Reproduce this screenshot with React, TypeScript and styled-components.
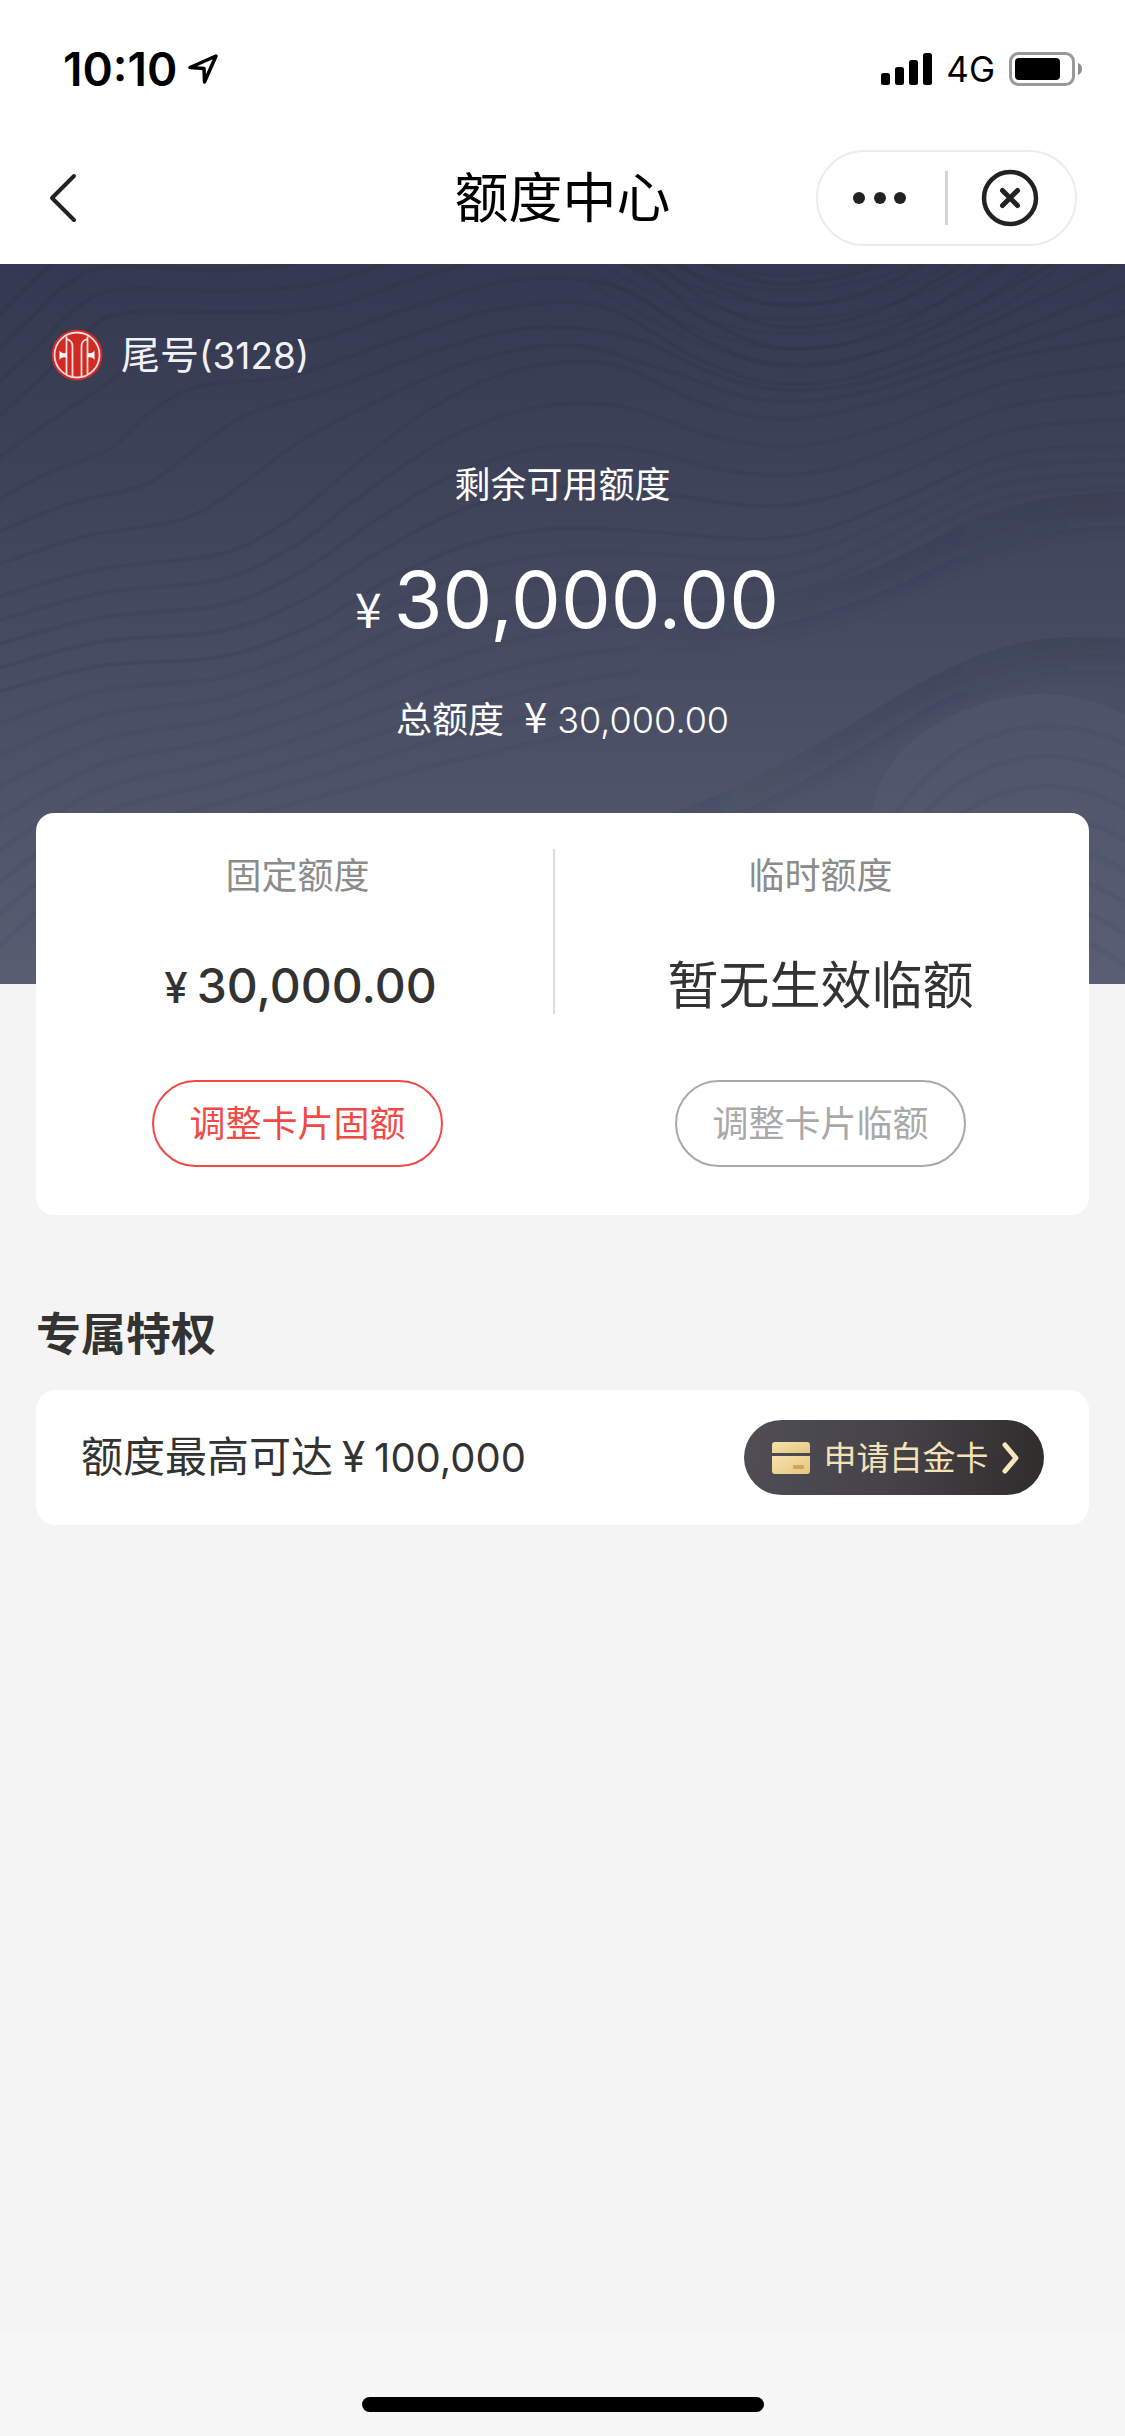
import React from 'react';
import styled, { createGlobalStyle } from 'styled-components';

const GlobalStyle = createGlobalStyle`
  *, *::before, *::after { box-sizing: border-box; }
  body {
    margin: 0;
    background: #f4f4f4;
    color: #333333;
    font-family: Inter, 'Noto Sans CJK SC', sans-serif;
    -webkit-font-smoothing: antialiased;
  }
  button { font-family: inherit; cursor: pointer; }
  h1, h2, p { margin: 0; font-weight: 400; }
`;

/* ---------- shell ---------- */

const Page = styled.div`
  display: flex;
  flex-direction: column;
  min-height: 100vh;
`;

const StatusBar = styled.div`
  display: flex;
  align-items: center;
  justify-content: space-between;
  height: 132px;
  padding: 0 42px 0 63px;
  background: #ffffff;
  color: #000000;
`;

const StatusGroup = styled.div<{ $gap: number }>`
  display: flex;
  align-items: center;
  gap: ${(p) => p.$gap}px;
  padding-top: 6px;
`;

const Clock = styled.span`
  font-size: 46px;
  line-height: 54px;
  font-weight: 600;
`;

const Network = styled.span`
  font-size: 35px;
  line-height: 44px;
`;

const NavBar = styled.header`
  display: grid;
  grid-template-columns: 1fr auto 1fr;
  align-items: center;
  height: 132px;
  padding: 0 48px;
  background: #ffffff;
`;

const BackButton = styled.button`
  display: flex;
  justify-self: start;
  padding: 0;
  border: 0;
  background: none;
`;

const NavTitle = styled.h1`
  padding-top: 2px;
  color: #000000;
  font-size: 54px;
  line-height: 72px;
`;

const Capsule = styled.div`
  display: flex;
  align-items: center;
  justify-self: end;
  width: 261px;
  height: 96px;
  border: 2px solid #ececec;
  border-radius: 48px;
`;

const CapsuleButton = styled.button`
  display: flex;
  flex: 1;
  align-items: center;
  justify-content: center;
  height: 100%;
  padding: 0 3px 0 0;
  border: 0;
  background: none;
`;

const CapsuleDivider = styled.span`
  width: 3px;
  height: 54px;
  background: #d4d4d4;
`;

/* ---------- hero ---------- */

const Hero = styled.section`
  position: relative;
  display: flex;
  flex-direction: column;
  align-items: center;
  padding: 63px 51px 236px;
  overflow: hidden;
  background: linear-gradient(180deg, #343850 0%, #454a60 50%, #585d72 100%);
  color: #ffffff;
`;

const HeroArt = styled.svg`
  position: absolute;
  inset: 0;
  width: 100%;
  height: 100%;
`;

const CardTag = styled.div`
  position: relative;
  display: flex;
  align-items: center;
  align-self: flex-start;
  gap: 18px;
  color: #f1f1f5;
  font-size: 39px;
  line-height: 56px;
`;

const CardDigits = styled.span`
  font-size: 37px;
  line-height: 1;
`;

const HeroLabel = styled.p`
  position: relative;
  margin-top: 74px;
  font-size: 36px;
  line-height: 56px;
`;

const Yen = styled.span<{ $size: number }>`
  font-family: 'Noto Sans CJK SC', sans-serif;
  font-size: ${(p) => p.$size}px;
  line-height: 1;
  font-weight: 400;
`;

const HeroAmount = styled.p`
  position: relative;
  display: flex;
  align-items: baseline;
  gap: 12px;
  margin-top: 36px;
  padding-left: 9px;
  font-size: 79px;
  line-height: 100px;
  font-weight: 400;
`;

const HeroTotal = styled.p`
  position: relative;
  display: flex;
  align-items: baseline;
  gap: 10px;
  margin-top: 43px;
  font-size: 36px;
  line-height: 56px;
`;

const TotalFigure = styled.span`
  font-weight: 300;
  line-height: 1;
`;

const TotalLabel = styled.span`
  margin-right: 10px;
`;

/* ---------- content ---------- */

const Content = styled.main`
  position: relative;
  display: flex;
  flex-direction: column;
  margin-top: -171px;
  padding: 0 36px;
`;

const LimitCard = styled.section`
  display: flex;
  padding: 36px 7px 48px 0;
  border-radius: 18px;
  background: #ffffff;
`;

const LimitColumn = styled.div`
  display: flex;
  flex: 1;
  flex-direction: column;
  align-items: center;
`;

const LimitDivider = styled.span`
  width: 2px;
  height: 165px;
  margin: 0 4px 0 -6px;
  background: #dcdcdc;
`;

const LimitLabel = styled.h2`
  color: #8c8c8c;
  font-size: 36px;
  line-height: 54px;
`;

const LimitValue = styled.p`
  display: flex;
  align-items: baseline;
  margin-top: 45px;
  font-size: 51px;
  line-height: 76px;
`;

const LimitFigure = styled.span`
  padding-left: 9px;
  font-size: 48px;
  font-weight: 500;
`;

const LimitYen = styled.span`
  padding-left: 6px;
  font-size: 42px;
  line-height: 1;
  font-weight: 500;
`;

const OutlineButton = styled.button<{ $tone: string }>`
  width: 291px;
  height: 87px;
  margin-top: 56px;
  padding: 0;
  border: 2px solid ${(p) => p.$tone};
  border-radius: 44px;
  background: none;
  color: ${(p) => p.$tone};
  font-size: 36px;
  line-height: 52px;
`;

const SectionTitle = styled.h2`
  margin-top: 88px;
  font-size: 45px;
  line-height: 64px;
  font-weight: 700;
`;

const PerkCard = styled.section`
  display: flex;
  align-items: center;
  justify-content: space-between;
  margin-top: 23px;
  padding: 30px 45px;
  border-radius: 20px;
  background: #ffffff;
`;

const PerkText = styled.p`
  display: flex;
  align-items: baseline;
  gap: 9px;
  font-size: 42px;
  line-height: 60px;
`;

const PerkFigure = styled.span`
  font-size: 40px;
`;

const PerkButton = styled.button`
  display: flex;
  align-items: center;
  justify-content: space-between;
  width: 300px;
  height: 75px;
  padding: 0 24px 0 28px;
  border: 0;
  border-radius: 38px;
  background: linear-gradient(100deg, #504d56 0%, #454348 50%, #2f2c2b 100%);
  color: #f5e2b8;
  font-size: 33px;
  line-height: 48px;
`;

const HomeArea = styled.footer`
  display: flex;
  align-items: flex-end;
  justify-content: center;
  height: 104px;
  margin-top: auto;
  padding-bottom: 24px;
  background: #f7f7f7;
`;

const HomeIndicator = styled.span`
  width: 402px;
  height: 15px;
  border-radius: 8px;
  background: #000000;
`;

/* ---------- contour artwork ---------- */

type Point = [number, number];

const smooth = (pts: Point[]) => {
  let d = `M${pts[0][0]} ${pts[0][1]}`;
  for (let i = 0; i < pts.length - 1; i += 1) {
    const a = pts[Math.max(i - 1, 0)];
    const b = pts[i];
    const c = pts[i + 1];
    const e = pts[Math.min(i + 2, pts.length - 1)];
    d += ` C${b[0] + (c[0] - a[0]) / 6} ${b[1] + (c[1] - a[1]) / 6} ${c[0] - (e[0] - b[0]) / 6} ${c[1] - (e[1] - b[1]) / 6} ${c[0]} ${c[1]}`;
  }
  return d;
};

const between = (from: Point[], to: Point[], count: number) =>
  Array.from({ length: count }, (_, i) => {
    const t = i / (count - 1);
    return smooth(from.map((p, k) => [p[0] + (to[k][0] - p[0]) * t, p[1] + (to[k][1] - p[1]) * t] as Point));
  });

const rim: Point[] = [[-10, 60], [30, 20], [60, -5], [100, -20], [220, -15], [320, -30], [420, -60], [560, -70], [650, -30], [720, 5], [790, 20], [880, 0], [980, -60]];
const ridge: Point[] = [[-10, 160], [45, 110], [85, 68], [130, 48], [240, 48], [330, 42], [430, 10], [540, -15], [640, 5], [705, 55], [790, 85], [900, 60], [1060, -40]];
const slope: Point[] = [[-10, 240], [50, 208], [110, 185], [150, 148], [200, 122], [290, 112], [400, 75], [500, 45], [600, 42], [705, 98], [790, 120], [900, 98], [1135, -10]];
const basin: Point[] = [[-10, 335], [100, 305], [220, 290], [290, 255], [350, 205], [430, 145], [520, 105], [610, 100], [705, 140], [790, 155], [890, 135], [1005, 95], [1135, 72]];
const shelf: Point[] = [[-10, 430], [100, 402], [220, 393], [310, 362], [390, 315], [470, 280], [550, 265], [640, 267], [760, 275], [830, 263], [900, 235], [1010, 190], [1135, 182]];
const foot: Point[] = [[-10, 690], [100, 600], [220, 560], [330, 530], [440, 500], [530, 480], [600, 465], [680, 450], [750, 435], [820, 410], [880, 370], [980, 310], [1135, 290]];

const upperLines = [...between(rim, ridge, 4), ...between(ridge, slope, 3).slice(1), ...between(slope, basin, 4).slice(1), ...between(basin, shelf, 5).slice(1)];
const lowerLines = between(shelf, foot, 9).slice(1);
const bowlLines = between(
  [[620, -40], [690, -5], [760, 10], [830, 8], [900, -10], [960, -50]],
  [[590, 20], [690, 75], [770, 98], [860, 92], [990, 50], [1100, -30]],
  7,
);

const creaseTop = 'M640 350 C760 350 850 318 930 278 C1000 242 1040 228 1140 228';
const creaseLow = 'M560 580 C700 555 820 480 900 430 C980 385 1030 364 1140 376';

const ContourArt = () => (
  <HeroArt viewBox="0 0 1125 720" preserveAspectRatio="none" aria-hidden="true">
    <defs>
      <filter id="soft" x="-10%" y="-40%" width="120%" height="180%">
        <feGaussianBlur stdDeviation="12" />
      </filter>
      <clipPath id="belowTop">
        <path d={`${creaseTop} V720 H640 Z`} />
      </clipPath>
      <clipPath id="belowLow">
        <path d={`${creaseLow} V720 H560 Z`} />
      </clipPath>
      <clipPath id="aboveTop">
        <path d={`${creaseTop} V-10 H-20 V720 H640 Z`} />
      </clipPath>
      <linearGradient id="creaseShade" gradientUnits="userSpaceOnUse" x1="600" y1="0" x2="1125" y2="0">
        <stop offset="0" stopColor="#2c3042" stopOpacity="0" />
        <stop offset="0.5" stopColor="#2c3042" stopOpacity="0.16" />
        <stop offset="1" stopColor="#2c3042" stopOpacity="0.26" />
      </linearGradient>
      <linearGradient id="dune" x1="0" y1="0" x2="0" y2="1">
        <stop offset="0" stopColor="#666c84" stopOpacity="0.16" />
        <stop offset="1" stopColor="#666c84" stopOpacity="0.1" />
      </linearGradient>
    </defs>
    <g fill="none" stroke="#23283c" strokeOpacity="0.12" strokeWidth="4" clipPath="url(#aboveTop)">
      {upperLines.map((d, i) => (
        <path key={i} d={d} />
      ))}
    </g>
    <g fill="none" stroke="#23283c" strokeOpacity="0.06" strokeWidth="5" clipPath="url(#aboveTop)">
      {lowerLines.map((d, i) => (
        <path key={i} d={d} />
      ))}
    </g>
    <g fill="none" stroke="#23283c" strokeOpacity="0.07" strokeWidth="3">
      {bowlLines.map((d, i) => (
        <path key={i} d={d} />
      ))}
    </g>
    <g clipPath="url(#belowTop)">
      <path d={creaseTop} fill="none" stroke="url(#creaseShade)" strokeWidth="50" filter="url(#soft)" />
    </g>
    <g clipPath="url(#belowLow)">
      <path d={creaseLow} fill="none" stroke="url(#creaseShade)" strokeWidth="50" filter="url(#soft)" />
    </g>
    <path d="M872 560 C870 490 950 434 1040 430 C1080 430 1100 440 1125 450 V720 H890 C878 660 872 620 872 560 Z" fill="url(#dune)" />
    <g fill="none" stroke="#2c3042" strokeOpacity="0.08" strokeWidth="5">
      {[0, 1, 2, 3, 4, 5, 6, 7].map((i) => (
        <path key={i} d={`M${890 + i * 8} ${560 + i * 26} C${930 + i * 8} ${490 + i * 26} ${1020 + i * 4} ${430 + i * 30} 1130 ${482 + i * 32}`} />
      ))}
    </g>
  </HeroArt>
);

/* ---------- icons ---------- */

const LocationIcon = () => (
  <svg width="32" height="32" viewBox="0 0 32 32" fill="none" stroke="#000" strokeWidth="3.500" strokeLinejoin="round" aria-hidden="true">
    <path d="M29 3 L3 14.500 L17 15.500 L17.500 29 Z" />
  </svg>
);

const SignalIcon = () => (
  <svg width="51" height="32" viewBox="0 0 51 32" aria-hidden="true">
    <rect x="0" y="20" width="9" height="12" rx="2.500" />
    <rect x="14" y="14" width="9" height="18" rx="2.500" />
    <rect x="28" y="7" width="9" height="25" rx="2.500" />
    <rect x="42" y="0" width="9" height="32" rx="2.500" />
  </svg>
);

const BatteryIcon = () => (
  <svg width="74" height="34" viewBox="0 0 74 34" aria-hidden="true">
    <rect x="1.500" y="1.500" width="63" height="31" rx="8" fill="none" stroke="#999" strokeWidth="3" />
    <rect x="6" y="6" width="45" height="22" rx="4" />
    <path d="M69 11 C72 12 73 14.500 73 17 C73 19.500 72 22 69 23 Z" fill="#8e8e8e" />
  </svg>
);

const BackIcon = () => (
  <svg width="30" height="50" viewBox="0 0 30 50" fill="none" stroke="#222" strokeWidth="4" strokeLinecap="round" strokeLinejoin="round" aria-hidden="true">
    <path d="M26 3 L4 25 L26 47" />
  </svg>
);

const MoreIcon = () => (
  <svg width="54" height="14" viewBox="0 0 54 14" fill="#222" aria-hidden="true">
    <circle cx="6" cy="7" r="6" />
    <circle cx="27" cy="7" r="6" />
    <circle cx="47" cy="7" r="6" />
  </svg>
);

const CloseIcon = () => (
  <svg width="58" height="58" viewBox="0 0 58 58" fill="none" stroke="#222" strokeLinecap="round" aria-hidden="true">
    <circle cx="29" cy="29" r="26" strokeWidth="4.500" />
    <path d="M21.500 21.500 L36.500 36.500 M36.500 21.500 L21.500 36.500" strokeWidth="5" />
  </svg>
);

const BankLogo = () => (
  <svg width="52" height="52" viewBox="0 0 52 52" aria-hidden="true">
    <circle cx="26" cy="26" r="25.500" fill="#cf2a24" />
    <g fill="none" stroke="#f6dcdc" strokeWidth="1.800">
      <circle cx="26" cy="26" r="22.500" />
      <path d="M15.500 7.500 V45" />
      <path d="M36.500 7.500 V45" />
      <path d="M15.500 10 C20 11.500 21.500 13 21.500 18 V48" />
      <path d="M36.500 10 C32 11.500 30.500 13 30.500 18 V48" />
    </g>
    <path d="M8.500 21.500 C10 24 12 24.500 15.500 24 V28.500 C12 28 10 28.500 8.500 31 Z" fill="#fff" />
    <path d="M43.500 21.500 C42 24 40 24.500 36.500 24 V28.500 C40 28 42 28.500 43.500 31 Z" fill="#fff" />
  </svg>
);

const GoldCardIcon = () => (
  <svg width="38" height="32" viewBox="0 0 38 32" aria-hidden="true">
    <defs>
      <linearGradient id="gold" x1="0" y1="0" x2="1" y2="1">
        <stop offset="0" stopColor="#f7e2ae" />
        <stop offset="1" stopColor="#e6c67c" />
      </linearGradient>
    </defs>
    <path d="M0 3 Q0 0 3 0 H35 Q38 0 38 3 V11 H0 Z" fill="url(#gold)" />
    <path d="M0 14 H38 V29 Q38 32 35 32 H3 Q0 32 0 29 Z" fill="url(#gold)" />
    <rect x="21" y="23" width="11" height="4" rx="1" fill="#cfa565" />
  </svg>
);

const ChevronIcon = () => (
  <svg width="18" height="32" viewBox="0 0 18 32" fill="none" stroke="#f9e6bf" strokeWidth="5" strokeLinecap="round" strokeLinejoin="round" aria-hidden="true">
    <path d="M3 3 L14 16 L3 29" />
  </svg>
);

/* ---------- page ---------- */

export default function App() {
  return (
    <Page>
      <GlobalStyle />
      <StatusBar>
        <StatusGroup $gap={10}>
          <Clock>10:10</Clock>
          <LocationIcon />
        </StatusGroup>
        <StatusGroup $gap={14}>
          <SignalIcon />
          <Network>4G</Network>
          <BatteryIcon />
        </StatusGroup>
      </StatusBar>

      <NavBar>
        <BackButton aria-label="返回">
          <BackIcon />
        </BackButton>
        <NavTitle>额度中心</NavTitle>
        <Capsule>
          <CapsuleButton aria-label="更多">
            <MoreIcon />
          </CapsuleButton>
          <CapsuleDivider />
          <CapsuleButton aria-label="关闭">
            <CloseIcon />
          </CapsuleButton>
        </Capsule>
      </NavBar>

      <Hero>
        <ContourArt />
        <CardTag>
          <BankLogo />
          <span>
            尾号<CardDigits>(3128)</CardDigits>
          </span>
        </CardTag>
        <HeroLabel>剩余可用额度</HeroLabel>
        <HeroAmount>
          <Yen $size={48}>¥</Yen>
          <span>30,000.00</span>
        </HeroAmount>
        <HeroTotal>
          <TotalLabel>总额度</TotalLabel>
          <Yen $size={42}>¥</Yen>
          <TotalFigure>30,000.00</TotalFigure>
        </HeroTotal>
      </Hero>

      <Content>
        <LimitCard>
          <LimitColumn>
            <LimitLabel>固定额度</LimitLabel>
            <LimitValue>
              <LimitYen>¥</LimitYen>
              <LimitFigure>30,000.00</LimitFigure>
            </LimitValue>
            <OutlineButton $tone="#f04a45">调整卡片固额</OutlineButton>
          </LimitColumn>
          <LimitDivider />
          <LimitColumn>
            <LimitLabel>临时额度</LimitLabel>
            <LimitValue>暂无生效临额</LimitValue>
            <OutlineButton $tone="#a9a9a9">调整卡片临额</OutlineButton>
          </LimitColumn>
        </LimitCard>

        <SectionTitle>专属特权</SectionTitle>
        <PerkCard>
          <PerkText>
            <span>额度最高可达</span>
            <span>¥</span>
            <PerkFigure>100,000</PerkFigure>
          </PerkText>
          <PerkButton>
            <GoldCardIcon />
            <span>申请白金卡</span>
            <ChevronIcon />
          </PerkButton>
        </PerkCard>
      </Content>

      <HomeArea>
        <HomeIndicator />
      </HomeArea>
    </Page>
  );
}
